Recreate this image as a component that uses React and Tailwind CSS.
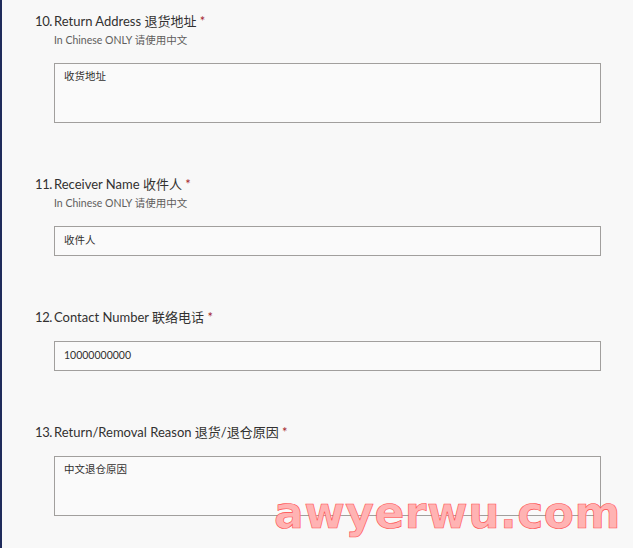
const font = { fontFamily: 'Lato, "Noto Sans CJK SC", sans-serif' }

const questions = [
  { no: '10.', label: 'Return Address 退货地址', hint: 'In Chinese ONLY 请使用中文', value: '收货地址', multi: true },
  { no: '11.', label: 'Receiver Name 收件人', hint: 'In Chinese ONLY 请使用中文', value: '收件人' },
  { no: '12.', label: 'Contact Number 联络电话', value: '10000000000' },
  { no: '13.', label: 'Return/Removal Reason 退货/退仓原因', value: '中文退仓原因', multi: true },
]

function Question({ q }) {
  return (
    <div className="pt-[52px] first:pt-3">
      <div className="flex text-[13px] leading-[18px] text-[#323130]">
        <span className="w-[19px] shrink-0 tracking-[-0.4px]">{q.no}</span>
        <span>
          {q.label} <span className="text-[#a4262c]">*</span>
        </span>
      </div>
      {q.hint && (
        <div className="pl-[19px] pt-[2px] text-[10.5px] leading-[16px] text-[#605e5c]">{q.hint}</div>
      )}
      <div className="pl-[19px] pt-[15px]">
        {q.multi ? (
          <div className="h-[60px] w-[547px] border border-[#a19f9d] bg-[#fafafa] px-[9px] pt-[4px] text-[10.5px] leading-[16px] text-[#323130]">
            {q.value}
          </div>
        ) : (
          <div className="flex h-[30px] w-[547px] items-center border border-[#a19f9d] bg-[#fafafa] px-[9px] text-[10.5px] text-[#323130]">
            {q.value}
          </div>
        )}
      </div>
    </div>
  )
}

export default function App() {
  return (
    <div className="relative min-h-[548px] overflow-hidden border-l-2 border-[#1f2b5b] bg-[#f8f8f8] pl-[33px]" style={font}>
      {questions.map((q) => (
        <Question key={q.no} q={q} />
      ))}
      <div
        className="absolute left-[272px] top-[491px] select-none text-[44px] font-bold leading-none tracking-[0.5px] text-[#ffb3b3]"
        style={{ fontFamily: '"DejaVu Sans", sans-serif', WebkitTextStroke: '0.6px #ff4d4d' }}
      >
        awyerwu.com
      </div>
    </div>
  )
}
